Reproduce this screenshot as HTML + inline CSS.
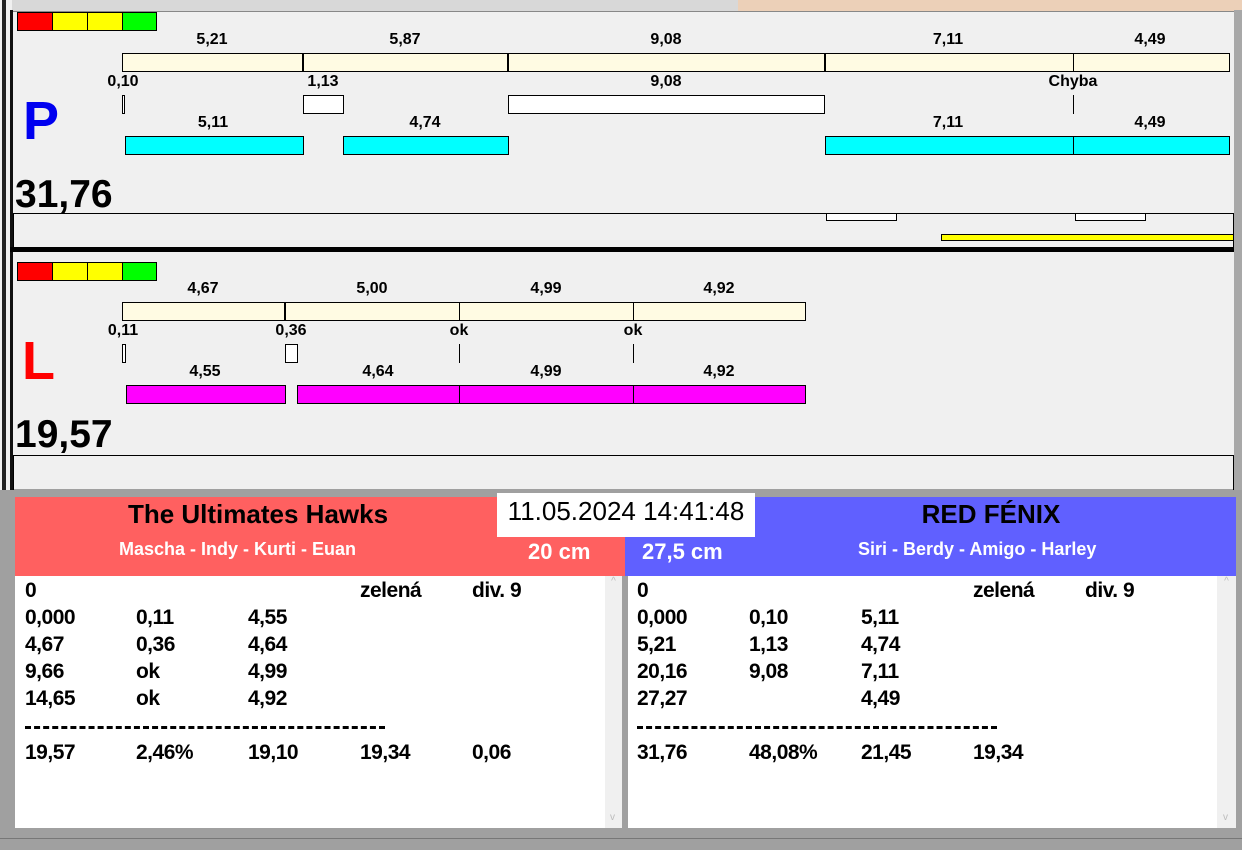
<!DOCTYPE html>
<html><head><meta charset="utf-8"><style>
*{margin:0;padding:0;box-sizing:border-box}
body{width:1242px;height:850px;overflow:hidden;background:#a0a0a0;position:relative;font-family:"Liberation Sans",Arial,sans-serif}
div{position:absolute}
.l{font-weight:bold;font-size:16px;transform:translateX(-50%);white-space:nowrap;line-height:16px}
.b{border:1px solid #000}
.c{background:#fffbe3}
.cy{background:#00ffff}
.mg{background:#ff00ff}
.w{background:#fff}
.v{width:1px;background:#000}
.t{font-weight:bold;font-size:21px;line-height:22px;white-space:nowrap;letter-spacing:-0.5px}
</style></head><body>
<div style="left:0;top:0;width:1242px;height:12px;background:#d8d8d8"></div>
<div style="left:738px;top:0;width:504px;height:11px;background:#ecd0b8"></div>
<div style="left:0;top:0;width:12px;height:490px;background:#f0f0f0"></div>
<div style="left:2px;top:0;width:4px;height:490px;background:#222"></div>
<div style="left:10px;top:10px;width:3px;height:480px;background:#111"></div>
<div style="left:13px;top:11px;width:1221px;height:478px;background:#f0f0f0;border-top:1px solid #888"></div>
<div style="left:1234px;top:10px;width:8px;height:480px;background:#a8a8a8"></div>

<div class="b" style="left:17px;top:12px;width:36px;height:19px;background:#f00"></div>
<div class="b" style="left:52px;top:12px;width:36px;height:19px;background:#ff0"></div>
<div class="b" style="left:87px;top:12px;width:36px;height:19px;background:#ff0"></div>
<div class="b" style="left:122px;top:12px;width:35px;height:19px;background:#0f0"></div>

<div class="l" style="left:212px;top:32px">5,21</div>
<div class="l" style="left:405px;top:32px">5,87</div>
<div class="l" style="left:666px;top:32px">9,08</div>
<div class="l" style="left:948px;top:32px">7,11</div>
<div class="l" style="left:1150px;top:32px">4,49</div>
<div class="b c" style="left:122px;top:53px;width:1108px;height:19px"></div>
<div style="left:302px;top:53px;width:2px;height:19px;background:#000"></div>
<div style="left:507px;top:53px;width:2px;height:19px;background:#000"></div>
<div style="left:824px;top:53px;width:2px;height:19px;background:#000"></div>
<div class="v" style="left:1073px;top:53px;height:19px"></div>

<div class="l" style="left:123px;top:74px">0,10</div>
<div class="l" style="left:323px;top:74px">1,13</div>
<div class="l" style="left:666px;top:74px">9,08</div>
<div class="l" style="left:1073px;top:74px">Chyba</div>
<div class="b w" style="left:122px;top:95px;width:3px;height:19px"></div>
<div class="b w" style="left:303px;top:95px;width:41px;height:19px"></div>
<div class="b w" style="left:508px;top:95px;width:317px;height:19px"></div>
<div class="v" style="left:1073px;top:95px;height:19px"></div>

<div style="left:23px;top:92px;font-size:54px;font-weight:bold;color:#0000f0;line-height:58px">P</div>

<div class="l" style="left:213px;top:115px">5,11</div>
<div class="l" style="left:425px;top:115px">4,74</div>
<div class="l" style="left:948px;top:115px">7,11</div>
<div class="l" style="left:1150px;top:115px">4,49</div>
<div class="b cy" style="left:125px;top:136px;width:179px;height:19px"></div>
<div class="b cy" style="left:343px;top:136px;width:166px;height:19px"></div>
<div class="b cy" style="left:825px;top:136px;width:405px;height:19px"></div>
<div class="v" style="left:1073px;top:136px;height:19px"></div>

<div style="left:15px;top:174px;font-size:39px;font-weight:bold;line-height:42px">31,76</div>
<div style="left:13px;top:213px;width:1221px;height:35px;border-top:1px solid #000;border-left:1px solid #000;border-right:1px solid #000"></div>
<div class="b w" style="left:826px;top:213px;width:71px;height:8px"></div>
<div class="b w" style="left:1075px;top:213px;width:71px;height:8px"></div>
<div class="b" style="left:941px;top:234px;width:293px;height:7px;background:#ff0"></div>
<div style="left:10px;top:247px;width:1224px;height:5px;background:#000"></div>

<div class="b" style="left:17px;top:262px;width:36px;height:19px;background:#f00"></div>
<div class="b" style="left:52px;top:262px;width:36px;height:19px;background:#ff0"></div>
<div class="b" style="left:87px;top:262px;width:36px;height:19px;background:#ff0"></div>
<div class="b" style="left:122px;top:262px;width:35px;height:19px;background:#0f0"></div>

<div class="l" style="left:203px;top:281px">4,67</div>
<div class="l" style="left:372px;top:281px">5,00</div>
<div class="l" style="left:546px;top:281px">4,99</div>
<div class="l" style="left:719px;top:281px">4,92</div>
<div class="b c" style="left:122px;top:302px;width:684px;height:19px"></div>
<div style="left:284px;top:302px;width:2px;height:19px;background:#000"></div>
<div class="v" style="left:459px;top:302px;height:19px"></div>
<div class="v" style="left:633px;top:302px;height:19px"></div>

<div class="l" style="left:123px;top:323px">0,11</div>
<div class="l" style="left:291px;top:323px">0,36</div>
<div class="l" style="left:459px;top:323px">ok</div>
<div class="l" style="left:633px;top:323px">ok</div>
<div class="b w" style="left:122px;top:344px;width:4px;height:19px"></div>
<div class="b w" style="left:285px;top:344px;width:13px;height:19px"></div>
<div class="v" style="left:459px;top:344px;height:19px"></div>
<div class="v" style="left:633px;top:344px;height:19px"></div>

<div style="left:22px;top:332px;font-size:54px;font-weight:bold;color:#f00;line-height:58px">L</div>

<div class="l" style="left:205px;top:364px">4,55</div>
<div class="l" style="left:378px;top:364px">4,64</div>
<div class="l" style="left:546px;top:364px">4,99</div>
<div class="l" style="left:719px;top:364px">4,92</div>
<div class="b mg" style="left:126px;top:385px;width:160px;height:19px"></div>
<div class="b mg" style="left:297px;top:385px;width:509px;height:19px"></div>
<div class="v" style="left:459px;top:385px;height:19px"></div>
<div class="v" style="left:633px;top:385px;height:19px"></div>

<div style="left:15px;top:414px;font-size:39px;font-weight:bold;line-height:42px">19,57</div>
<div style="left:13px;top:455px;width:1221px;height:35px;border-top:1px solid #000;border-left:1px solid #000;border-right:1px solid #000"></div>

<div style="left:15px;top:497px;width:610px;height:79px;background:#ff6060"></div>
<div style="left:625px;top:497px;width:611px;height:79px;background:#6060ff"></div>
<div style="left:497px;top:493px;width:258px;height:44px;background:#fff;font-size:26px;line-height:34px;text-align:center;padding-top:1px">11.05.2024 14:41:48</div>
<div style="left:120px;top:499px;width:276px;font-size:26px;font-weight:bold;text-align:center;line-height:30px;white-space:nowrap">The Ultimates Hawks</div>
<div style="left:860px;top:499px;width:262px;font-size:26px;font-weight:bold;text-align:center;line-height:30px">RED FÉNIX</div>
<div style="left:119px;top:539px;font-size:18px;font-weight:bold;color:#fff;white-space:nowrap;line-height:20px">Mascha - Indy - Kurti - Euan</div>
<div style="left:858px;top:539px;font-size:18px;font-weight:bold;color:#fff;white-space:nowrap;line-height:20px">Siri - Berdy - Amigo - Harley</div>
<div style="left:528px;top:540px;font-size:22px;font-weight:bold;color:#fff;line-height:24px">20 cm</div>
<div style="left:642px;top:540px;font-size:22px;font-weight:bold;color:#fff;line-height:24px">27,5 cm</div>

<div style="left:15px;top:576px;width:590px;height:252px;background:#fff"></div>
<div style="left:605px;top:576px;width:17px;height:252px;background:#f0f0f0;color:#bbb;font-size:10px;text-align:center">^<div style="left:5px;top:236px">v</div></div>
<div style="left:628px;top:576px;width:589px;height:252px;background:#fff"></div>
<div style="left:1217px;top:576px;width:19px;height:252px;background:#f0f0f0;color:#bbb;font-size:10px;text-align:center">^<div style="left:6px;top:236px">v</div></div>
<div style="left:0;top:838px;width:1242px;height:1px;background:#777"></div>

<div class="t" style="left:25px;top:580px">0</div>
<div class="t" style="left:360px;top:580px">zelená</div>
<div class="t" style="left:472px;top:580px">div. 9</div>
<div class="t" style="left:25px;top:607px">0,000</div><div class="t" style="left:136px;top:607px">0,11</div><div class="t" style="left:248px;top:607px">4,55</div>
<div class="t" style="left:25px;top:634px">4,67</div><div class="t" style="left:136px;top:634px">0,36</div><div class="t" style="left:248px;top:634px">4,64</div>
<div class="t" style="left:25px;top:661px">9,66</div><div class="t" style="left:136px;top:661px">ok</div><div class="t" style="left:248px;top:661px">4,99</div>
<div class="t" style="left:25px;top:688px">14,65</div><div class="t" style="left:136px;top:688px">ok</div><div class="t" style="left:248px;top:688px">4,92</div>
<div style="left:25px;top:726px;width:360px;height:3px;border-top:3px dashed #000"></div>
<div class="t" style="left:25px;top:742px">19,57</div><div class="t" style="left:136px;top:742px">2,46%</div><div class="t" style="left:248px;top:742px">19,10</div><div class="t" style="left:360px;top:742px">19,34</div><div class="t" style="left:472px;top:742px">0,06</div>

<div class="t" style="left:637px;top:580px">0</div>
<div class="t" style="left:973px;top:580px">zelená</div>
<div class="t" style="left:1085px;top:580px">div. 9</div>
<div class="t" style="left:637px;top:607px">0,000</div><div class="t" style="left:749px;top:607px">0,10</div><div class="t" style="left:861px;top:607px">5,11</div>
<div class="t" style="left:637px;top:634px">5,21</div><div class="t" style="left:749px;top:634px">1,13</div><div class="t" style="left:861px;top:634px">4,74</div>
<div class="t" style="left:637px;top:661px">20,16</div><div class="t" style="left:749px;top:661px">9,08</div><div class="t" style="left:861px;top:661px">7,11</div>
<div class="t" style="left:637px;top:688px">27,27</div><div class="t" style="left:861px;top:688px">4,49</div>
<div style="left:637px;top:726px;width:360px;height:3px;border-top:3px dashed #000"></div>
<div class="t" style="left:637px;top:742px">31,76</div><div class="t" style="left:749px;top:742px">48,08%</div><div class="t" style="left:861px;top:742px">21,45</div><div class="t" style="left:973px;top:742px">19,34</div>
</body></html>
